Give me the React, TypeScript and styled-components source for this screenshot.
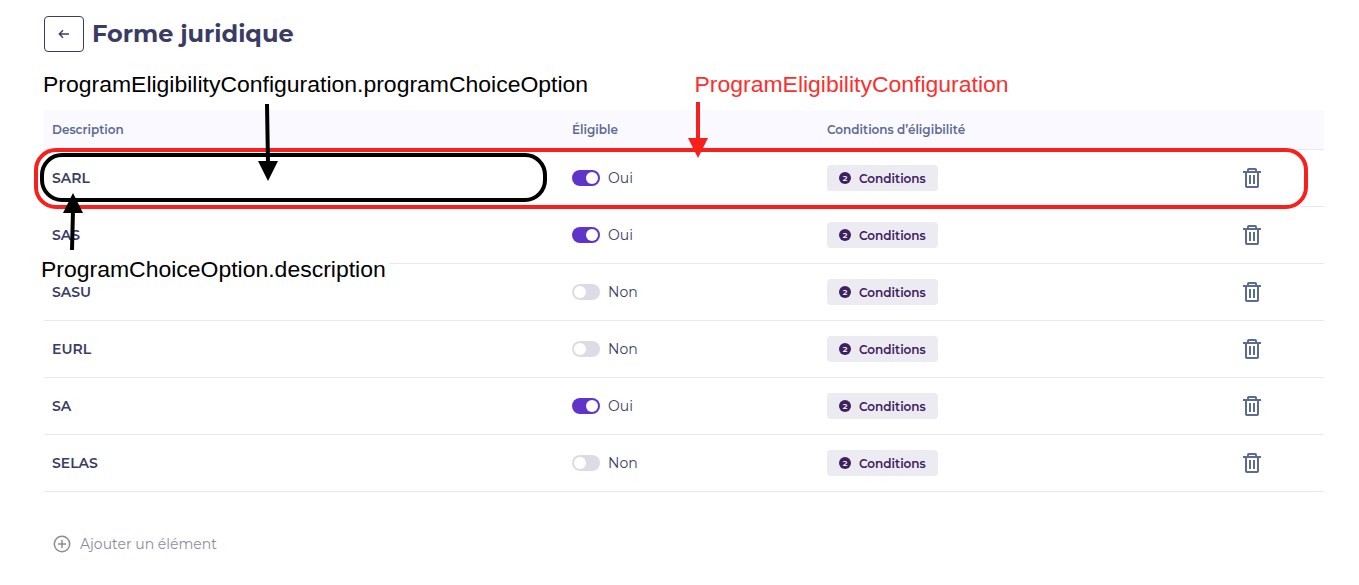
import React from "react";
import styled, { createGlobalStyle } from "styled-components";

const GlobalStyle = createGlobalStyle`
  body { margin: 0; background: #fff; }
  * { box-sizing: border-box; }
  button { font-family: inherit; cursor: pointer; }
`;

const Page = styled.main`
  position: relative;
  height: 585px;
  padding: 16px 35px 0 44px;
  overflow: hidden;
  font-family: Montserrat, Inter, "Open Sans", sans-serif;
  color: #3b3c63;
`;

const PageHeader = styled.header`
  display: flex;
  align-items: center;
  gap: 8px;
  height: 36px;
`;

const BackButton = styled.button`
  display: flex;
  align-items: center;
  justify-content: center;
  width: 40px;
  height: 36px;
  padding: 0;
  border: 1px solid #3b3c63;
  border-radius: 4px;
  background: #fff;
`;

const Title = styled.h1`
  margin: 0;
  font-size: 24px;
  line-height: 36px;
  font-weight: 700;
  white-space: nowrap;
`;

const Table = styled.section`
  margin-top: 58px;
`;

const Row = styled.div`
  display: grid;
  grid-template-columns: 520px 255px 1fr 100px;
  align-items: center;
  height: 57px;
  padding-left: 8px;
  border-bottom: 1px solid #e8e7f7;
`;

const HeadRow = styled(Row)`
  height: 40px;
  background: #faf9ff;
  color: #5c6b92;
  font-size: 12px;
  font-weight: 600;
`;

const Name = styled.span`
  font-size: 14px;
  font-weight: 600;
`;

const Eligibility = styled.div`
  display: flex;
  align-items: center;
  gap: 8px;
  font-size: 14px;
  line-height: 16px;
`;

const EligibilityLabel = styled.span`
  margin-top: -1px;
`;

const Toggle = styled.span<{ $on: boolean }>`
  display: flex;
  align-items: center;
  justify-content: ${(p) => (p.$on ? "flex-end" : "flex-start")};
  width: 28px;
  height: 16px;
  padding: 0 2px;
  border-radius: 8px;
  background: ${(p) => (p.$on ? "#6134c9" : "#dddce6")};
  &::after {
    content: "";
    width: 12px;
    height: 12px;
    border-radius: 50%;
    background: #fff;
  }
`;

const ConditionsButton = styled.button`
  display: flex;
  align-items: center;
  gap: 8px;
  width: 111px;
  height: 26px;
  padding: 0 0 0 12px;
  border: 0;
  border-radius: 4px;
  background: #edebf2;
  color: #3d2060;
  font-size: 12px;
  font-weight: 600;
`;

const Count = styled.span`
  display: flex;
  align-items: center;
  justify-content: center;
  width: 12px;
  height: 12px;
  border-radius: 50%;
  background: #3d2060;
  color: #fff;
  font-size: 8px;
`;

const DeleteButton = styled.button`
  display: flex;
  width: 20px;
  height: 20px;
  margin-left: 18px;
  padding: 0;
  border: 0;
  background: none;
`;

const AddButton = styled.button`
  display: flex;
  align-items: center;
  gap: 9px;
  height: 20px;
  margin: 42px 0 0 9px;
  padding: 0;
  border: 0;
  background: none;
  color: #8d8b9b;
  font-size: 14px;
`;

const Outline = styled.div<{ $color: string; $x: number; $y: number; $w: number; $h: number }>`
  position: absolute;
  left: ${(p) => p.$x}px;
  top: ${(p) => p.$y}px;
  width: ${(p) => p.$w}px;
  height: ${(p) => p.$h}px;
  border: 4px solid ${(p) => p.$color};
  border-radius: 22px;
  pointer-events: none;
`;

const Note = styled.div<{ $color?: string; $x: number; $y: number; $w: number }>`
  position: absolute;
  left: ${(p) => p.$x}px;
  top: ${(p) => p.$y}px;
  width: ${(p) => p.$w}px;
  height: 28px;
  padding-left: 3px;
  background: #fff;
  color: ${(p) => p.$color ?? "#000"};
  font-family: "Liberation Sans", Arial, sans-serif;
  font-size: 22.97px;
  line-height: 28px;
  white-space: nowrap;
`;

const Arrows = styled.svg`
  position: absolute;
  inset: 0;
  pointer-events: none;
`;

const TrashIcon = () => (
  <svg width="20" height="20" viewBox="0 0 20 20" fill="none" stroke="#5c6b92" strokeWidth="2">
    <path d="M1 4h18" />
    <path d="M6 4V1.6Q6 1 6.6 1h6.8Q14 1 14 1.6V4" strokeWidth="1.9" />
    <path d="M4 4v14.2Q4 19 4.8 19h10.4Q16 19 16 18.2V4" />
    <path d="M8 7v9M12 7v9" />
  </svg>
);

const items = [
  { name: "SARL", eligible: true },
  { name: "SAS", eligible: true },
  { name: "SASU", eligible: false },
  { name: "EURL", eligible: false },
  { name: "SA", eligible: true },
  { name: "SELAS", eligible: false },
];

export default function App() {
  return (
    <Page>
      <GlobalStyle />
      <PageHeader>
        <BackButton aria-label="Retour">
          <svg width="12" height="10" viewBox="0 0 12 10" fill="none" stroke="#3b3c63" strokeWidth="1.4">
            <path d="M11 5H1.5M5 1.2L1.3 5L5 8.8" />
          </svg>
        </BackButton>
        <Title>Forme juridique</Title>
      </PageHeader>
      <Table>
        <HeadRow>
          <span>Description</span>
          <span>Éligible</span>
          <span>Conditions d’éligibilité</span>
        </HeadRow>
        {items.map((item) => (
          <Row key={item.name}>
            <Name>{item.name}</Name>
            <Eligibility>
              <Toggle $on={item.eligible} />
              <EligibilityLabel>{item.eligible ? "Oui" : "Non"}</EligibilityLabel>
            </Eligibility>
            <ConditionsButton>
              <Count>2</Count>
              Conditions
            </ConditionsButton>
            <DeleteButton aria-label="Supprimer">
              <TrashIcon />
            </DeleteButton>
          </Row>
        ))}
      </Table>
      <AddButton>
        <svg width="18" height="18" viewBox="0 0 18 18" fill="none" stroke="#8d8b9b" strokeWidth="1.5">
          <circle cx="9" cy="9" r="7.7" />
          <path d="M9 5v8M5 9h8" />
        </svg>
        Ajouter un élément
      </AddButton>

      <Note $x={40} $y={70} $w={552}>ProgramEligibilityConfiguration.programChoiceOption</Note>
      <Note $x={691.5} $y={70} $w={320} $color="#fb2f2d">ProgramEligibilityConfiguration</Note>
      <Note $x={38} $y={255} $w={351}>ProgramChoiceOption.description</Note>
      <Outline $color="#f8201c" $x={34} $y={148} $w={1274} $h={61} />
      <Outline $color="#000" $x={40} $y={153} $w={507} $h={49} />
      <Arrows width="1359" height="585" viewBox="0 0 1359 585">
        <path d="M267 104L268 164M72 250L73 210" stroke="#000" strokeWidth="4" />
        <path d="M258 161h20l-10 20zM63 213h20l-10-20z" fill="#000" />
        <path d="M698 102v38" stroke="#f8201c" strokeWidth="4" />
        <path d="M688 138h20l-10 20z" fill="#f8201c" />
      </Arrows>
    </Page>
  );
}
